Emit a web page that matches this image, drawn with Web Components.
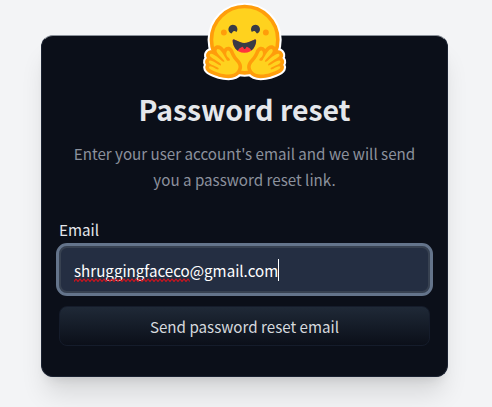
<!DOCTYPE html>
<html lang="en">
<head>
<meta charset="utf-8">
<title>Password reset</title>
<style>
html,body{margin:0;height:100%;overflow:hidden}
body{background:#f3f4f6;font-family:"Noto Sans CJK SC","Noto Sans",sans-serif}
</style>
</head>
<body>
<reset-page></reset-page>
<script>
const define = (name, html) => customElements.define(name, class extends HTMLElement {
  constructor() {
    super();
    const t = document.createElement('template');
    t.innerHTML = html;
    this.attachShadow({mode: 'open'}).append(t.content.cloneNode(true));
  }
});

const hand = 'M17.52 48c-1.62 0-3.06.66-4.07 1.87a5.97 5.97 0 0 0-1.33 3.76 7.1 7.1 0 0 0-1.94-.3c-1.55 0-2.95.59-3.94 1.66a5.8 5.8 0 0 0-.8 7 5.3 5.3 0 0 0-1.79 2.82c-.24.9-.48 2.8.8 4.74a5.22 5.22 0 0 0-.37 5.02c1.02 2.32 3.57 4.14 8.52 6.1 3.07 1.22 5.89 2 5.91 2.01a44.33 44.33 0 0 0 10.93 1.6c5.86 0 10.05-1.8 12.46-5.34 3.88-5.69 3.33-10.9-1.7-15.92-2.77-2.78-4.62-6.87-5-7.77-.78-2.66-2.84-5.62-6.25-5.62a5.7 5.7 0 0 0-4.6 2.46c-1-1.26-1.98-2.25-2.86-2.82A7.4 7.4 0 0 0 17.52 48Z';
const palm = 'M17.52 52c.51 0 1.14.22 1.82.65 2.14 1.36 6.25 8.43 7.76 11.18.5.92 1.37 1.31 2.14 1.31 1.55 0 2.75-1.53.15-3.48-3.92-2.93-2.55-7.72-.68-8.01.08-.02.17-.02.24-.02 1.7 0 2.45 2.93 2.45 2.93s2.2 5.52 5.98 9.3c3.77 3.77 3.97 6.8 1.22 10.83-1.88 2.75-5.47 3.58-9.16 3.58-3.81 0-7.73-.9-9.92-1.46-.11-.03-13.45-3.8-11.76-7 .28-.54.75-.76 1.34-.76 2.38 0 6.7 3.54 8.57 3.54.41 0 .7-.17.83-.6.79-2.85-12.06-4.05-10.98-8.17.2-.73.71-1.02 1.44-1.02 3.14 0 10.2 5.53 11.68 5.53.11 0 .2-.03.24-.1.74-1.2.33-2.04-4.9-5.2-5.21-3.16-8.88-5.06-6.8-7.33.24-.26.58-.38 1-.38 3.17 0 10.66 6.82 10.66 6.82s2.02 2.1 3.25 2.1c.28 0 .52-.1.68-.38.86-1.46-8.06-8.22-8.56-11.01-.34-1.9.24-2.85 1.31-2.85Z';

define('hug-logo', `
<style>:host{display:block;width:86px;height:80px}svg{display:block;overflow:visible}</style>
<svg width="85.8" height="79.5" viewBox="0 0 95 88" aria-hidden="true">
<g fill="#fff" stroke="#fff" stroke-width="4.6" stroke-linejoin="round"><circle cx="47.21" cy="41.75" r="38.75"/><path d="${hand}"/><path transform="matrix(-1 0 0 1 94.42 0)" d="${hand}"/><path d="M30 66h34v16H30z" stroke="none"/></g>
<circle cx="47.21" cy="41.75" r="36.75" fill="#FFD21E" stroke="#FF9D0B" stroke-width="4"/>
<path fill="#3A3B45" d="M58.5 32.3c1.28.44 1.78 3.06 3.07 2.38a5 5 0 1 0-6.76-2.07c.61 1.15 2.55-.72 3.7-.32ZM34.95 32.3c-1.28.44-1.79 3.06-3.07 2.38a5 5 0 1 1 6.76-2.07c-.61 1.15-2.56-.72-3.7-.32Z"/>
<path fill="#FF323D" d="M46.96 56.29c9.83 0 13-8.76 13-13.26 0-2.34-1.57-1.6-4.09-.36-2.33 1.15-5.46 2.74-8.9 2.74-7.19 0-13-6.88-13-2.38s3.16 13.26 13 13.26Z"/>
<path fill="#3A3B45" fill-rule="evenodd" d="M39.43 54a8.7 8.7 0 0 1 5.3-4.49c.4-.12.81.57 1.24 1.28.4.68.82 1.37 1.24 1.37.45 0 .9-.68 1.33-1.35.45-.7.89-1.38 1.32-1.25a8.61 8.61 0 0 1 5 4.17c3.73-2.94 5.1-7.74 5.1-10.7 0-2.34-1.57-1.6-4.09-.36l-.14.07c-2.31 1.15-5.39 2.67-8.77 2.67s-6.45-1.52-8.77-2.67c-2.6-1.29-4.23-2.1-4.23.29 0 3.05 1.46 8.06 5.47 10.97Z"/>
<circle cx="70.71" cy="33.75" r="3.25" fill="#FF9D0B"/><circle cx="24.21" cy="33.75" r="3.25" fill="#FF9D0B"/>
<g><path fill="#FF9D0B" d="${hand}"/><path fill="#FFD21E" d="${palm}"/></g>
<g transform="matrix(-1 0 0 1 94.42 0)"><path fill="#FF9D0B" d="${hand}"/><path fill="#FFD21E" d="${palm}"/></g>
</svg>`);

define('form-card', `
<style>
:host{display:block;box-sizing:border-box;position:relative;width:406.5px;height:342px;padding:53.5px 16.5px 0 17px;border-radius:12px;background:#0b0f19;border:1px solid #1a2130;border-top-color:#8b929b;box-shadow:0 21px 26px -5px rgba(0,0,0,.12),0 8px 11px -6px rgba(0,0,0,.1)}
::slotted([slot=badge]){position:absolute;left:159.5px;top:-33.7px}
</style>
<slot name="badge"></slot><slot></slot>`);

define('card-heading', `
<style>
:host{display:block;text-align:center}
h1{margin:0;font-size:28.4px;line-height:38px;font-weight:700;color:#e5e7eb}
p{margin:12px auto 0;width:350px;font-size:15.16px;line-height:26px;color:#8b919d}
</style>
<h1><slot name="title"></slot></h1><p><slot></slot></p>`);

define('email-field', `
<style>
:host{display:block;margin-top:24px;padding:0}
.label{font-size:15.2px;line-height:26px;color:#e5e7eb}
.box{box-sizing:border-box;display:flex;align-items:center;margin:1px -3px 0;height:53px;border:3px solid #64748b;border-radius:11px;padding:0 15px;background:#242e42;box-shadow:inset 0 0 0 2px #374151;font-size:15.15px;line-height:24px;color:#fff}
.text{display:flex;align-items:center;padding-top:1px}
.word{position:relative}
svg{position:absolute;left:0;bottom:0;width:100%;height:4px}
.caret{width:1px;height:22px;background:#fff}
</style>
<div class="label"><slot name="label"></slot></div>
<div class="box"><div class="text"><span class="word"><slot name="user"></slot><svg aria-hidden="true"><defs><pattern id="z" width="4" height="4" patternUnits="userSpaceOnUse"><path d="M-1 4.7L2 1L5 4.7" fill="none" stroke="#d4111c" stroke-width="1.1"/></pattern></defs><rect width="100%" height="4" fill="url(#z)"/></svg></span><span><slot name="host"></slot></span><i class="caret"></i></div></div>`);

define('submit-button', `
<style>
:host{display:block;margin-top:10px}
button{display:flex;align-items:center;justify-content:center;box-sizing:border-box;width:100%;height:40px;margin:0;padding:0;border:1px solid #151c2b;border-radius:8px;background:linear-gradient(#1f2937,#0b0f19);font:15.16px/24px "Noto Sans CJK SC","Noto Sans",sans-serif;color:#d6d9de}
</style>
<button type="button"><slot></slot></button>`);

define('reset-page', `
<style>:host{display:flex;height:100%;box-sizing:border-box;padding:35px 0 0 41px;align-items:flex-start}</style>
<form-card><hug-logo slot="badge"></hug-logo>
<card-heading><span slot="title">Password reset</span>Enter your user account's email and we will send you a password reset link.</card-heading>
<email-field><span slot="label">Email</span><span slot="user">shruggingfaceco</span><span slot="host">@gmail.com</span></email-field>
<submit-button>Send password reset email</submit-button></form-card>`);
</script>
</body>
</html>
